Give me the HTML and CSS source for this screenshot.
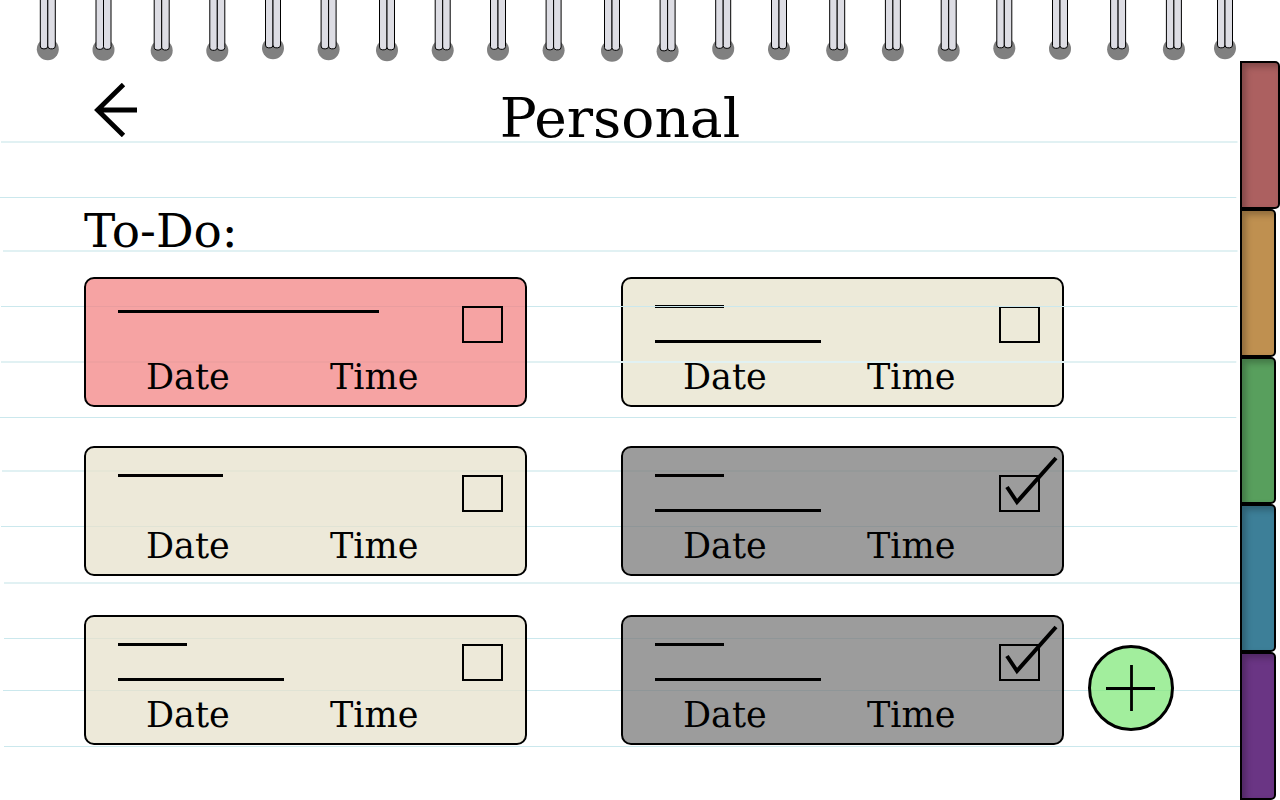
FILE: index.html
```html
<!DOCTYPE html>
<html lang="en">
<head>
<meta charset="utf-8">
<meta name="viewport" content="width=device-width, initial-scale=1">
<title>Personal</title>
<link rel="stylesheet" href="styles.css">
</head>
<body>
<div class="notebook">
  <svg class="rules" aria-hidden="true">
    <g class="rule-soft">
      <line x1="1" x2="99.8%" y1="142" y2="142"/>
      <line x1="3" x2="99.8%" y1="251" y2="251"/>
      <line x1="1" x2="99.7%" y1="362" y2="362"/>
      <line x1="2" x2="99.8%" y1="471" y2="471"/>
      <line x1="4" x2="100%" y1="583" y2="583"/>
    </g>
    <g class="rule-fine">
      <line x1="0" x2="99.7%" y1="197.5" y2="197.5"/>
      <line x1="1" x2="99.8%" y1="306.5" y2="306.5"/>
      <line x1="0" x2="99.7%" y1="417.5" y2="417.5"/>
      <line x1="1" x2="99.8%" y1="526.5" y2="526.5"/>
      <line x1="4" x2="100%" y1="638.5" y2="638.5"/>
      <line x1="3" x2="100%" y1="690.5" y2="690.5"/>
      <line x1="4" x2="100%" y1="746.5" y2="746.5"/>
    </g>
  </svg>

  <svg class="binding" viewBox="0 0 1280 64" aria-hidden="true">
    <defs>
      <g id="ring">
        <circle cx="0" cy="49.3" r="11" fill="#808080"/>
        <rect x="-7.5" y="-10" width="7.5" height="58.8" rx="2.8" fill="#dddde4" stroke="#000"/>
        <rect x="0" y="-10" width="7.5" height="58.8" rx="2.8" fill="#dddde4" stroke="#000"/>
      </g>
    </defs>
    <use href="#ring" x="47.8"/><use href="#ring" x="103.5" y="0.5"/>
    <use href="#ring" x="161.7" y="1.2"/><use href="#ring" x="217.3" y="1.5"/>
    <use href="#ring" x="273" y="-1"/><use href="#ring" x="328.6"/>
    <use href="#ring" x="387" y="1"/><use href="#ring" x="442.7" y="1"/>
    <use href="#ring" x="498" y="0.5"/><use href="#ring" x="553.6" y="1"/>
    <use href="#ring" x="612" y="1.5"/><use href="#ring" x="667.6" y="2"/>
    <use href="#ring" x="723.2" y="-0.5"/><use href="#ring" x="779"/>
    <use href="#ring" x="837.2" y="1"/><use href="#ring" x="892.9" y="1"/>
    <use href="#ring" x="948.7" y="1.3"/><use href="#ring" x="1004.3" y="-1"/>
    <use href="#ring" x="1060" y="-0.5"/><use href="#ring" x="1118.1"/>
    <use href="#ring" x="1173.9"/><use href="#ring" x="1225" y="-1"/>
  </svg>

  <main class="page">
    <header class="header">
      <button class="back" type="button" aria-label="Back">
        <svg width="44" height="54" viewBox="0 0 44 54"><path d="M29.5 1.500 3.500 27 29.500 52.500M4 27H43" fill="none" stroke="#000" stroke-width="4.800"/></svg>
      </button>
      <h1 class="title">Personal</h1>
    </header>

    <h2 class="section-title">To-Do:</h2>

    <div class="board">
      <ul class="tasks">
        <li class="task task-urgent">
          <div class="task-top">
            <div class="note note-single"><span class="stroke stroke-full"></span></div>
            <label class="tick"><input type="checkbox" aria-label="Task 1 done"></label>
          </div>
          <div class="when"><span>Date</span><span>Time</span></div>
        </li>
        <li class="task task-under">
          <div class="task-top">
            <div class="note"><span class="stroke stroke-short"></span><span class="stroke stroke-long"></span></div>
            <label class="tick"><input type="checkbox" aria-label="Task 2 done"></label>
          </div>
          <div class="when"><span>Date</span><span>Time</span></div>
        </li>
        <li class="task">
          <div class="task-top">
            <div class="note"><span class="stroke stroke-medium"></span></div>
            <label class="tick"><input type="checkbox" aria-label="Task 3 done"></label>
          </div>
          <div class="when"><span>Date</span><span>Time</span></div>
        </li>
        <li class="task task-done">
          <div class="task-top">
            <div class="note"><span class="stroke stroke-short"></span><span class="stroke stroke-long"></span></div>
            <label class="tick"><input type="checkbox" aria-label="Task 4 done" checked><svg class="check" viewBox="0 0 62 58" aria-hidden="true"><path d="M8 32 18 47 57 3"/></svg></label>
          </div>
          <div class="when"><span>Date</span><span>Time</span></div>
        </li>
        <li class="task">
          <div class="task-top">
            <div class="note"><span class="stroke stroke-short"></span><span class="stroke stroke-long"></span></div>
            <label class="tick"><input type="checkbox" aria-label="Task 5 done"></label>
          </div>
          <div class="when"><span>Date</span><span>Time</span></div>
        </li>
        <li class="task task-done">
          <div class="task-top">
            <div class="note"><span class="stroke stroke-short"></span><span class="stroke stroke-long"></span></div>
            <label class="tick"><input type="checkbox" aria-label="Task 6 done" checked><svg class="check" viewBox="0 0 62 58" aria-hidden="true"><path d="M8 32 18 47 57 3"/></svg></label>
          </div>
          <div class="when"><span>Date</span><span>Time</span></div>
        </li>
      </ul>
      <button class="add" type="button" aria-label="Add task">
        <svg width="50" height="46" viewBox="0 0 50 46"><path d="M0 23.500H49M25.500 0V46" fill="none" stroke="#000" stroke-width="2.800"/></svg>
      </button>
    </div>
  </main>

  <nav class="tabs" aria-label="Sections">
    <button class="tab tab-red" type="button" aria-label="Red section"></button>
    <button class="tab tab-orange" type="button" aria-label="Orange section"></button>
    <button class="tab tab-green" type="button" aria-label="Green section"></button>
    <button class="tab tab-blue" type="button" aria-label="Blue section"></button>
    <button class="tab tab-purple" type="button" aria-label="Purple section"></button>
  </nav>
</div>
</body>
</html>
```
FILE: styles.css
```css
* {
  box-sizing: border-box;
}

body {
  margin: 0;
  background: #fff;
  color: #000;
  font-family: "DejaVu Serif", serif;
}

button {
  padding: 0;
  border: 0;
  background: none;
  cursor: pointer;
}

svg {
  display: block;
}

.notebook {
  position: relative;
  display: grid;
  grid-template-columns: minmax(0, 1fr) 40px;
  min-height: 100vh;
}

/* Ruled lines and spiral binding are drawn over the sheet */
.rules {
  position: absolute;
  inset: 0 40px 0 0;
  width: calc(100% - 40px);
  height: 100%;
  z-index: 1;
  pointer-events: none;
}

.rule-soft {
  stroke: #e1f1f3;
  stroke-width: 2;
}

.rule-fine {
  stroke: #cbe8ed;
  stroke-width: 1;
}

.binding {
  position: absolute;
  top: 0;
  left: 0;
  width: 100%;
  pointer-events: none;
}

.page {
  padding: 83px 66px 24px 84px;
}

.header {
  display: grid;
  grid-template-columns: 64px 1fr 82px;
  align-items: start;
}

.back {
  justify-self: start;
  margin-left: 10px;
}

.title {
  position: relative;
  z-index: 2;
  margin: 0;
  font-size: 55px;
  font-weight: 400;
  line-height: 70px;
  text-align: center;
}

.section-title {
  position: relative;
  z-index: 2;
  margin: 48px 0 16px;
  font-size: 47px;
  font-weight: 400;
  line-height: 60px;
}

.board {
  display: flex;
  align-items: flex-end;
  gap: 24px;
}

.tasks {
  flex: 1;
  display: grid;
  grid-template-columns: 1fr 1fr;
  gap: 39px 94px;
  margin: 0;
  padding: 0;
  list-style: none;
}

.task {
  position: relative;
  z-index: 2;
  padding: 26px 22px 7px 32px;
  border: 2px solid #000;
  border-radius: 10px;
  background: rgba(231, 226, 204, 0.75);
}

.task-urgent {
  background: rgba(243, 132, 132, 0.75);
}

.task-done {
  background: rgba(123, 123, 123, 0.75);
}

.task-under {
  z-index: 0;
  background: #edead9;
}

.task-top {
  display: flex;
  align-items: flex-start;
  justify-content: space-between;
}

.note {
  display: grid;
  gap: 32px;
}

.note-single {
  padding-top: 5px;
}

.stroke {
  display: block;
  height: 3px;
  background: #000;
}

.stroke-short {
  width: 69px;
}

.stroke-medium {
  width: 105px;
}

.stroke-long {
  width: 166px;
}

.stroke-full {
  width: 261px;
}

.tick {
  position: relative;
  padding-top: 1px;
}

.tick input {
  display: block;
  appearance: none;
  width: 41px;
  height: 37px;
  margin: 0;
  border: 2px solid #000;
}

.check {
  position: absolute;
  left: 0;
  bottom: -1px;
  width: 62px;
  height: 58px;
  fill: none;
  stroke: #000;
  stroke-width: 4;
}

.when {
  display: grid;
  grid-template-columns: 184px 1fr;
  padding: 13px 0 0 28px;
  font-size: 35px;
  line-height: 42px;
}

.add {
  position: relative;
  z-index: 2;
  display: grid;
  place-items: center;
  width: 86px;
  height: 86px;
  margin-bottom: 14px;
  border: 3px solid #000;
  border-radius: 50%;
  background: rgba(131, 232, 124, 0.75);
}

.tabs {
  display: flex;
  flex-direction: column;
  padding-top: 61px;
}

.tab {
  flex: 1;
  width: 36px;
  border: 2px solid #000;
  border-radius: 0 5px 5px 0;
  box-shadow: inset 4px 4px 6px rgba(0, 0, 0, 0.25);
}

.tab-red {
  width: 40px;
  background: #ac6060;
}

.tab-orange {
  background: #bf9050;
}

.tab-green {
  background: #589f5d;
}

.tab-blue {
  background: #3d7f98;
}

.tab-purple {
  background: #6a3584;
}
```
